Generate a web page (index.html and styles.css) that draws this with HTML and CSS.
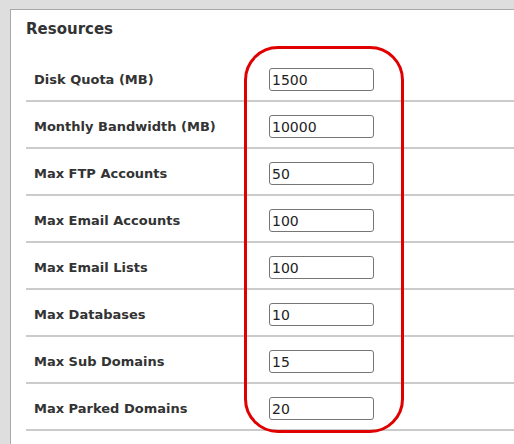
FILE: index.html
```html
<!DOCTYPE html>
<html>
<head>
<meta charset="utf-8">
<link rel="stylesheet" href="styles.css">
</head>
<body>
<div class="panel">
  <h2 class="title">Resources</h2>
  <div class="rows">
    <div class="row"><span class="label">Disk Quota (MB)</span><input class="field" type="text" value="1500"></div>
    <div class="row"><span class="label">Monthly Bandwidth (MB)</span><input class="field" type="text" value="10000"></div>
    <div class="row"><span class="label">Max FTP Accounts</span><input class="field" type="text" value="50"></div>
    <div class="row"><span class="label">Max Email Accounts</span><input class="field" type="text" value="100"></div>
    <div class="row"><span class="label">Max Email Lists</span><input class="field" type="text" value="100"></div>
    <div class="row"><span class="label">Max Databases</span><input class="field" type="text" value="10"></div>
    <div class="row"><span class="label">Max Sub Domains</span><input class="field" type="text" value="15"></div>
    <div class="row"><span class="label">Max Parked Domains</span><input class="field" type="text" value="20"></div>
    <div class="row"><span class="label">Max Addon Domains</span><input class="field" type="text" value="5"></div>
  </div>
</div>
<div class="highlight"></div>
</body>
</html>
```

FILE: styles.css
```css
html, body {
  margin: 0;
  padding: 0;
  height: 100%;
  overflow: hidden;
}
body {
  background: #dedede;
  font-family: "DejaVu Sans", sans-serif;
  color: #333;
  padding: 9px 0 0 10px;
  box-sizing: border-box;
}
.panel {
  background: #fff;
  border: 1px solid #a9a9a9;
  border-right: none;
  padding: 0 0 0 15px;
  height: 600px;
}
.title {
  margin: 0;
  padding-top: 10px;
  font-size: 15px;
  font-weight: bold;
  line-height: 18px;
  height: 35px;
  box-sizing: border-box;
  padding-bottom: 0;
  margin-bottom: 10px;
}
.rows {
  display: flex;
  flex-direction: column;
}
.row {
  display: flex;
  align-items: center;
  padding: 13px 0 9px 8px;
  border-bottom: 2px solid #cbcbcb;
}
.label {
  width: 235px;
  font-size: 13px;
  font-weight: bold;
  line-height: 23px;
}
.field {
  width: 105px;
  height: 23px;
  box-sizing: border-box;
  margin: 0;
  border: 1px solid #767676;
  border-radius: 3px;
  padding: 0 2px;
  font-family: "DejaVu Sans", sans-serif;
  font-size: 14px;
  color: #222;
  background: #fff;
}
.highlight {
  position: absolute;
  left: 244px;
  top: 46px;
  width: 160px;
  height: 387px;
  box-sizing: border-box;
  border: 3px solid #e00000;
  border-radius: 34px;
}
```
